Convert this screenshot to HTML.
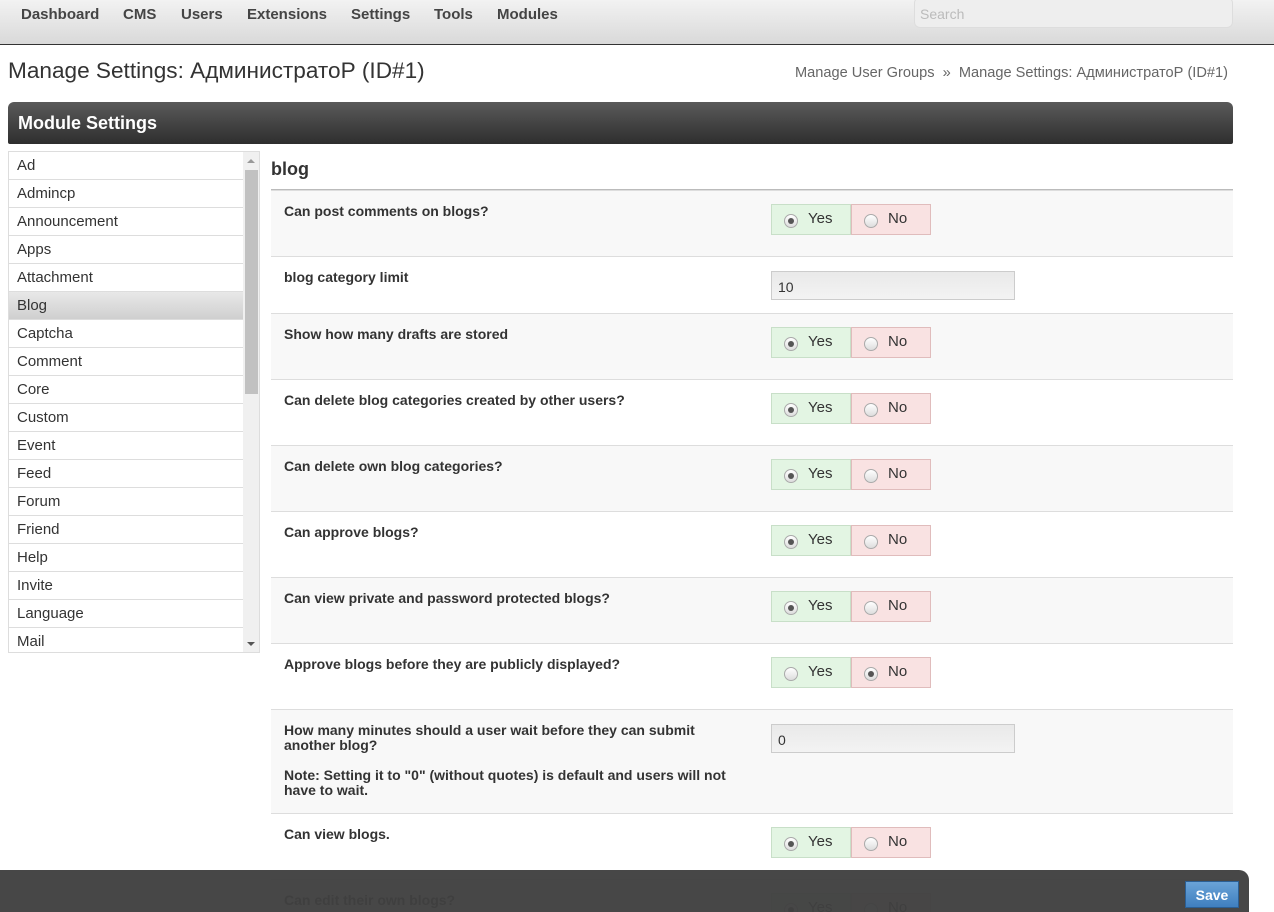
<!DOCTYPE html>
<html><head><meta charset="utf-8"><style>
*{box-sizing:border-box;margin:0;padding:0}
html,body{width:1274px;height:912px;overflow:hidden}
body{background:#fff;font-family:"Liberation Sans",Arial,sans-serif;position:relative;color:#333}
.nav{position:absolute;left:0;top:0;width:1274px;height:45px;background:linear-gradient(#f2f2f2,#d9d9d9);border-bottom:1px solid #333}
.nav span{position:absolute;top:6px;font-size:15px;font-weight:bold;color:#444}
.search{position:absolute;left:914px;top:-3px;width:319px;height:31px;border:1px solid #ddd;border-radius:6px;background:#eee;font-size:14px;color:#bbb;padding:8px 0 0 5px}
h1{position:absolute;left:8px;top:58px;font-size:22.6px;font-weight:normal;color:#333}
.bc{position:absolute;left:795px;top:65px;font-size:14.6px;color:#666}
.mh{position:absolute;left:8px;top:102px;width:1225px;height:42px;border-radius:6px 6px 2px 2px;background:linear-gradient(#5a5a5a,#2e2e2e);color:#fff;font-weight:bold;font-size:18px;padding:11px 0 0 10px}
.list{position:absolute;left:8px;top:151px;width:252px;height:502px;border:1px solid #ddd;overflow:hidden}
.list .it{height:28px;border-bottom:1px solid #ddd;width:234px;font-size:15px;padding:5px 0 0 8px;color:#333}
.list .sel{background:linear-gradient(#e8e8e8,#cfcfcf)}
.sb{position:absolute;left:234px;top:0;width:16px;height:500px;background:#f0f0f0}
.thumb{position:absolute;left:236px;top:18px;width:13px;height:224px;background:#c1c1c1}
.bh{position:absolute;left:271px;top:159px;font-size:18px;font-weight:bold;color:#333}
.row{position:absolute;left:271px;width:962px;border-top:1px solid #ddd}
.g{background:#f8f8f8}
.lb{position:absolute;left:13px;top:13px;font-size:14px;font-weight:bold;color:#333;width:465px;line-height:15px}
.y,.n{position:absolute;top:13px;width:80px;height:31px;font-size:15px;padding:5px 0 0 36px}
.y{left:500px;background:#e3f5e3;border:1px solid #c8dfc8}
.n{left:580px;background:#f9e2e2;border:1px solid #e0bcbc}
.r{position:absolute;left:12px;top:9px;width:14px;height:14px;border-radius:50%;border:1px solid #aaa;background:linear-gradient(#fff,#ddd)}
.r.c:after{content:"";position:absolute;left:3px;top:3px;width:6px;height:6px;border-radius:50%;background:#555}
.inp{position:absolute;left:500px;top:14px;width:244px;height:29px;border:1px solid #ccc;background:linear-gradient(#e9e9e9,#f3f3f3);font-size:14px;padding:7px 0 0 6px}
.foot{position:absolute;left:0;top:870px;width:1249px;height:42px;background:rgba(64,64,64,.96);border-radius:0 10px 0 0}
.save{position:absolute;left:1185px;top:881px;width:54px;height:27px;background:linear-gradient(#6aa3d8,#3f7fbf);border:1px solid #2b5f94;color:#fff;font-weight:bold;font-size:14px;text-align:center;padding-top:5px}
</style></head><body>
<div class="nav">
<span style="left:21px">Dashboard</span><span style="left:123px">CMS</span><span style="left:181px">Users</span><span style="left:247px">Extensions</span><span style="left:351px">Settings</span><span style="left:434px">Tools</span><span style="left:497px">Modules</span>
<div class="search">Search</div>
</div>
<h1>Manage Settings: АдминистратоР (ID#1)</h1>
<div class="bc">Manage User Groups &nbsp;» &nbsp;Manage Settings: АдминистратоР (ID#1)</div>
<div class="mh">Module Settings</div>
<div class="list">
<div class="it">Ad</div><div class="it">Admincp</div><div class="it">Announcement</div><div class="it">Apps</div><div class="it">Attachment</div><div class="it sel">Blog</div><div class="it">Captcha</div><div class="it">Comment</div><div class="it">Core</div><div class="it">Custom</div><div class="it">Event</div><div class="it">Feed</div><div class="it">Forum</div><div class="it">Friend</div><div class="it">Help</div><div class="it">Invite</div><div class="it">Language</div><div class="it">Mail</div>
<div class="sb"></div><div class="thumb"></div>
<div style="position:absolute;left:238px;top:3px;border:4px solid transparent;border-bottom-color:#999;width:0;height:0"></div>
<div style="position:absolute;left:238px;top:490px;border:4px solid transparent;border-top-color:#555;width:0;height:0"></div>
</div>
<div class="bh">blog</div>
<div class="row" style="top:189px;height:1px;border-top:1px solid #bbb"></div>
<div class="row g" style="top:190px;height:66px"><div class="lb">Can post comments on blogs?</div><div class="y"><i class="r c"></i>Yes</div><div class="n"><i class="r"></i>No</div></div>
<div class="row" style="top:256px;height:57px"><div class="lb">blog category limit</div><div class="inp">10</div></div>
<div class="row g" style="top:313px;height:66px"><div class="lb">Show how many drafts are stored</div><div class="y"><i class="r c"></i>Yes</div><div class="n"><i class="r"></i>No</div></div>
<div class="row" style="top:379px;height:66px"><div class="lb">Can delete blog categories created by other users?</div><div class="y"><i class="r c"></i>Yes</div><div class="n"><i class="r"></i>No</div></div>
<div class="row g" style="top:445px;height:66px"><div class="lb">Can delete own blog categories?</div><div class="y"><i class="r c"></i>Yes</div><div class="n"><i class="r"></i>No</div></div>
<div class="row" style="top:511px;height:66px"><div class="lb">Can approve blogs?</div><div class="y"><i class="r c"></i>Yes</div><div class="n"><i class="r"></i>No</div></div>
<div class="row g" style="top:577px;height:66px"><div class="lb">Can view private and password protected blogs?</div><div class="y"><i class="r c"></i>Yes</div><div class="n"><i class="r"></i>No</div></div>
<div class="row" style="top:643px;height:66px"><div class="lb">Approve blogs before they are publicly displayed?</div><div class="y"><i class="r"></i>Yes</div><div class="n"><i class="r c"></i>No</div></div>
<div class="row g" style="top:709px;height:104px"><div class="lb">How many minutes should a user wait before they can submit<br>another blog?<br><span style="display:block;margin-top:15px">Note: Setting it to "0" (without quotes) is default and users will not have to wait.</span></div><div class="inp">0</div></div>
<div class="row" style="top:813px;height:66px"><div class="lb">Can view blogs.</div><div class="y"><i class="r c"></i>Yes</div><div class="n"><i class="r"></i>No</div></div>
<div class="row g" style="top:879px;height:33px"><div class="lb">Can edit their own blogs?</div><div class="y"><i class="r c"></i>Yes</div><div class="n"><i class="r"></i>No</div></div>
<div class="foot"></div>
<div class="save">Save</div>
</body></html>
